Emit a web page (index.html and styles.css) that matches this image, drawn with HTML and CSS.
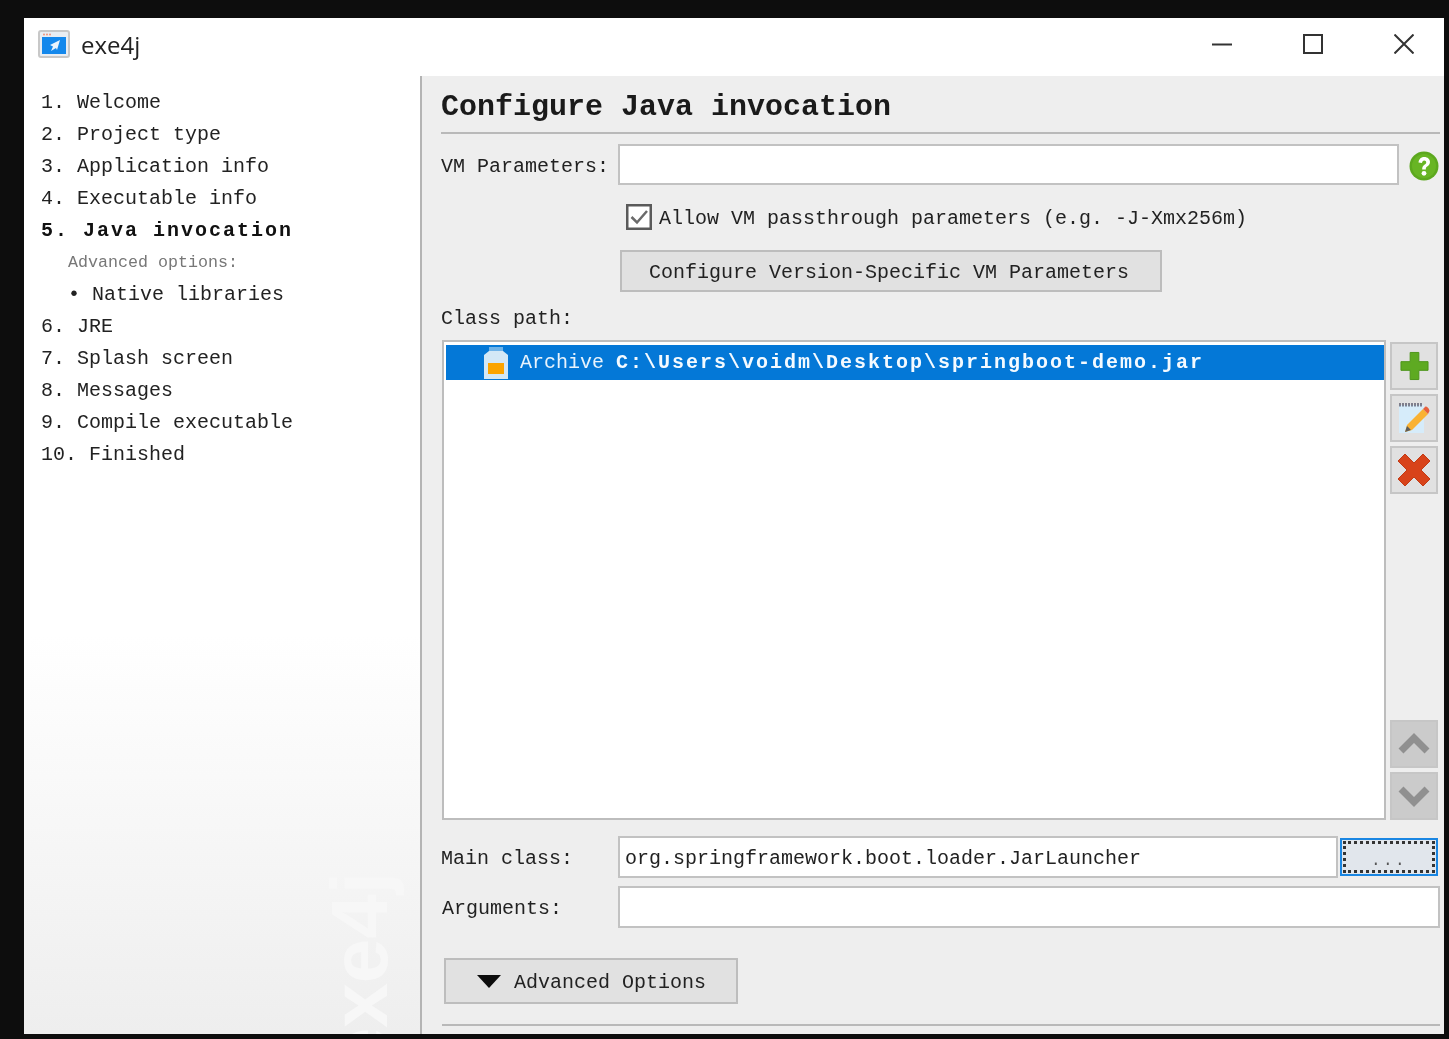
FILE: index.html
```html
<!DOCTYPE html>
<html lang="en">
<head>
<meta charset="utf-8">
<title>exe4j</title>
<link rel="stylesheet" href="styles.css">
</head>
<body>
<div class="window">
  <header class="titlebar">
    <svg class="app-icon" viewBox="0 0 32 28" aria-hidden="true">
      <rect x="1" y="1" width="30" height="26" rx="2" fill="#e9edf2" stroke="#c8c8c8" stroke-width="2"/>
      <rect x="4" y="7" width="24" height="17" fill="#1488ec"/>
      <circle cx="6" cy="4.5" r="0.9" fill="#f08a70"/><circle cx="9" cy="4.5" r="0.9" fill="#f08a70"/><circle cx="12" cy="4.5" r="0.9" fill="#f08a70"/>
      <path d="M22 10 L12 15 L15 16.5 L13 21 L18 18 L19 20 Z" fill="#eaf4fd"/>
    </svg>
    <span class="app-name">exe4j</span>
    <div class="win-controls">
      <svg viewBox="0 0 20 20" aria-hidden="true"><path d="M0 10.5H20" stroke="#333" stroke-width="2"/></svg>
      <svg viewBox="0 0 20 20" aria-hidden="true"><rect x="1" y="1" width="18" height="18" fill="none" stroke="#333" stroke-width="2"/></svg>
      <svg viewBox="0 0 20 20" aria-hidden="true"><path d="M0.5 0.5L19.5 19.5M19.5 0.5L0.5 19.5" stroke="#333" stroke-width="2"/></svg>
    </div>
  </header>
  <div class="main">
    <aside class="sidebar">
      <ol class="steps">
        <li>1.&nbsp;Welcome</li>
        <li>2.&nbsp;Project type</li>
        <li>3.&nbsp;Application info</li>
        <li>4.&nbsp;Executable info</li>
        <li class="current">5.&nbsp;Java invocation</li>
        <li class="sub-head">Advanced options:</li>
        <li class="sub-item"><span class="bullet">•</span>Native libraries</li>
        <li>6.&nbsp;JRE</li>
        <li>7.&nbsp;Splash screen</li>
        <li>8.&nbsp;Messages</li>
        <li>9.&nbsp;Compile executable</li>
        <li>10.&nbsp;Finished</li>
      </ol>
      <div class="watermark">exe4j</div>
    </aside>
    <main class="content">
      <h1 class="page-title">Configure Java invocation</h1>
      <div class="row vm-row">
        <label class="label">VM Parameters:</label>
        <div class="field vm-field"></div>
        <svg class="help" viewBox="0 0 30 30" aria-hidden="true">
          <circle cx="15" cy="15" r="14.5" fill="#5ca81e"/>
          <circle cx="15" cy="15" r="12" fill="#68b524"/>
          <path d="M9.5 11.5C9.8 7.8 12.5 6 15.3 6C18.6 6 21 8.2 21 11.1C21 13.4 19.6 14.6 18.2 15.6C17 16.4 16.8 17 16.8 18.5H13.2C13.1 16.2 13.8 14.8 15.4 13.7C16.6 12.9 17.2 12.3 17.2 11.4C17.2 10.4 16.4 9.6 15.2 9.6C14 9.6 13.2 10.5 13 12Z" fill="#fff"/>
          <circle cx="15" cy="22.3" r="2.4" fill="#fff"/>
        </svg>
      </div>
      <div class="check-row">
        <svg class="checkbox" viewBox="0 0 26 26" aria-hidden="true">
          <rect x="1.25" y="1.25" width="23.5" height="23.5" fill="#fff" stroke="#5a5a5a" stroke-width="2.5"/>
          <path d="M5.5 13L11 18.5L21 7" fill="none" stroke="#6a6a6a" stroke-width="2.5"/>
        </svg>
        <span class="lowered">Allow VM passthrough parameters (e.g. -J-Xmx256m)</span>
      </div>
      <button class="btn config-btn" type="button">Configure Version-Specific VM Parameters</button>
      <div class="label class-label">Class path:</div>
      <div class="class-area">
        <div class="list">
          <div class="list-row">
            <svg class="jar" viewBox="0 0 24 32" aria-hidden="true">
              <path d="M5 0H19V4L24 8V32H0V8L5 4Z" fill="#d3e8f6"/>
              <path d="M5 0H19V4H5Z" fill="#6fb3e8"/>
              <rect x="4" y="16" width="16" height="11" fill="#fba400"/>
            </svg>
            <span>Archive <b class="path">C:\Users\voidm\Desktop\springboot-demo.jar</b></span>
          </div>
        </div>
        <div class="tools">
          <button class="tool" type="button" aria-label="Add">
            <svg class="icon-add" viewBox="0 0 30 30" aria-hidden="true"><path d="M10.5 1H19.5V10.5H29V19.5H19.5V29H10.5V19.5H1V10.5H10.5Z" fill="#5eaa22" stroke="#4c9418" stroke-width="1"/></svg>
          </button>
          <button class="tool" type="button" aria-label="Edit">
            <svg viewBox="0 0 32 32" aria-hidden="true">
              <rect x="1" y="3" width="25" height="28" fill="#d6ecfa"/>
              <path d="M2 1V4.5M5 1V4.5M8 1V4.5M11 1V4.5M14 1V4.5M17 1V4.5M20 1V4.5M23 1V4.5" stroke="#667" stroke-width="1.6"/>
              <path d="M9 23L25 7L30 12L14 28L7 30Z" fill="#f9b233"/>
              <path d="M25 7L27.5 4.5C28.5 4 31.5 6.5 31.5 9L30 12Z" fill="#e8603c"/>
              <path d="M9 24L7 30L13 28Z" fill="#5c5c5c"/>
            </svg>
          </button>
          <button class="tool" type="button" aria-label="Remove">
            <svg class="icon-remove" viewBox="0 0 34 34" aria-hidden="true"><path d="M8 1L17 10L26 1L33 8L24 17L33 26L26 33L17 24L8 33L1 26L10 17L1 8Z" fill="#d8431a" stroke="#c23a14" stroke-width="1"/></svg>
          </button>
          <div class="tools-space"></div>
          <button class="tool disabled" type="button" aria-label="Up">
            <svg viewBox="0 0 32 22" aria-hidden="true"><path d="M3 18L16 5L29 18" fill="none" stroke="#909090" stroke-width="7"/></svg>
          </button>
          <button class="tool disabled" type="button" aria-label="Down">
            <svg viewBox="0 0 32 22" aria-hidden="true"><path d="M3 4L16 17L29 4" fill="none" stroke="#909090" stroke-width="7"/></svg>
          </button>
        </div>
      </div>
      <div class="row main-row">
        <label class="label">Main class:</label>
        <div class="field main-field">org.springframework.boot.loader.JarLauncher</div>
        <button class="browse" type="button"><span>...</span></button>
      </div>
      <div class="row args-row">
        <label class="label">Arguments:</label>
        <div class="field args-field"></div>
      </div>
      <button class="btn adv-btn" type="button"><i class="tri"></i><span class="lowered">Advanced Options</span></button>
      <div class="bottom-rule"></div>
    </main>
  </div>
</div>
</body>
</html>
```
FILE: styles.css
```css
* { box-sizing: border-box; }
html, body { margin: 0; height: 100%; }
body {
  background: #0d0d0d;
  padding: 18px 5px 5px 24px;
  overflow: hidden;
  font-family: "Liberation Mono", "DejaVu Sans Mono", monospace;
  font-size: 20px;
  color: #222;
}
.window {
  height: 1016px;
  display: flex;
  flex-direction: column;
  background: #fff;
  overflow: hidden;
  filter: blur(0.45px);
}
.titlebar {
  height: 58px;
  flex: none;
  display: flex;
  align-items: center;
  padding: 0 30px 6px 14px;
}
.app-icon { width: 32px; height: 28px; margin-right: 11px; }
.app-name { font-family: "Open Sans", sans-serif; font-size: 24px; color: #222; }
.win-controls { margin-left: auto; display: flex; gap: 71px; }
.win-controls svg { width: 20px; height: 20px; display: block; }
.main { flex: 1; display: flex; min-height: 0; }
.sidebar {
  width: 398px;
  flex: none;
  position: relative;
  overflow: hidden;
  border-right: 2px solid #b4b4b4;
  background: linear-gradient(#fff 0, #fff 560px, #eeeeee 958px);
}
.steps { list-style: none; margin: 0; padding: 11px 0 0 17px; }
.steps li { height: 32px; line-height: 32px; white-space: nowrap; }
.steps .current { font-weight: 700; letter-spacing: 2px; color: #111; }
.steps .sub-head { font-size: 16.67px; color: #777; padding-left: 27px; }
.steps .sub-item { padding-left: 27px; display: flex; }
.bullet { width: 24px; flex: none; }
.watermark {
  position: absolute;
  left: 298px;
  bottom: -38px;
  font-family: "Liberation Sans", sans-serif;
  font-weight: 700;
  font-size: 80px;
  line-height: 76px;
  color: #f7f7f7;
  writing-mode: vertical-rl;
  transform: rotate(180deg);
}
.content {
  flex: 1;
  min-width: 0;
  background: #eeeeee;
  padding: 0 4px 0 19px;
  display: flex;
  flex-direction: column;
}
.page-title {
  margin: 0;
  padding: 11px 0 5px;
  height: 58px;
  font-size: 30px;
  line-height: 40px;
  font-weight: 700;
  color: #1a1a1a;
  border-bottom: 2px solid #b9b9b9;
}
.row { display: flex; }
.label { display: block; color: #222; white-space: nowrap; }
.lowered { padding-top: 2px; }
.field {
  background: #fff;
  border: 2px solid #c2c2c2;
  padding-left: 5px;
  color: #222;
}
.vm-row { margin-top: 10px; align-items: flex-start; }
.vm-row .label { width: 177px; height: 41px; line-height: 46px; }
.vm-field { width: 781px; height: 41px; }
.help { width: 30px; height: 30px; margin: 7px 0 0 10px; }
.check-row {
  margin: 19px 0 0 185px;
  height: 26px;
  display: flex;
  align-items: center;
  gap: 7px;
  white-space: nowrap;
}
.checkbox { width: 26px; height: 26px; flex: none; }
.btn {
  display: block;
  font: inherit;
  color: #222;
  background: #e1e1e1;
  border: 2px solid #bdbdbd;
  padding: 0;
}
.config-btn { width: 542px; height: 42px; margin: 20px 0 0 179px; padding: 2px 4px 0 0; }
.class-label { height: 24px; line-height: 26px; margin-top: 14px; }
.class-area { margin: 10px 0 0 1px; display: flex; gap: 4px; align-items: stretch; height: 480px; }
.list {
  width: 944px;
  background: #fff;
  border: 2px solid #bdbdbd;
  padding: 3px 0 0 2px;
}
.list-row {
  height: 35px;
  background: #0478d7;
  color: #e8f3fc;
  display: flex;
  align-items: center;
  padding-left: 38px;
  gap: 12px;
  white-space: nowrap;
}
.jar { width: 24px; height: 32px; flex: none; }
.path { letter-spacing: 2px; color: #f4faff; }
.tools { width: 48px; display: flex; flex-direction: column; gap: 4px; padding-top: 2px; }
.tools-space { flex: 1; }
.tool {
  width: 48px;
  height: 48px;
  flex: none;
  padding: 0;
  background: #e1e1e1;
  border: 2px solid #c6c6c6;
  display: flex;
  align-items: center;
  justify-content: center;
}
.tool svg { width: 32px; height: 32px; }
.tool .icon-add { width: 29px; height: 30px; }
.tool .icon-remove { width: 34px; height: 34px; }
.tool.disabled { background: #cbcbcb; }
.main-row { margin-top: 16px; align-items: flex-start; }
.main-row .label { width: 177px; height: 42px; line-height: 46px; }
.main-field { width: 720px; height: 42px; line-height: 42px; }
.browse {
  width: 98px;
  height: 38px;
  margin: 2px 0 0 2px;
  padding: 1px;
  font: inherit;
  color: #555;
  background: #e1e6ec;
  border: 2px solid #1a86e2;
  display: flex;
}
.browse span {
  flex: 1;
  border: 3px dotted #333;
  line-height: 34px;
  font-size: 16px;
  letter-spacing: 2.4px;
  text-align: center;
}
.args-row { margin-top: 8px; align-items: flex-start; }
.args-row .label { padding-left: 1px; width: 177px; height: 42px; line-height: 46px; }
.args-field { width: 822px; height: 42px; }
.adv-btn {
  width: 294px;
  height: 46px;
  margin: 30px 0 0 3px;
  display: flex;
  align-items: center;
  text-align: left;
  padding-left: 31px;
}
.tri {
  width: 0;
  height: 0;
  border-left: 12px solid transparent;
  border-right: 12px solid transparent;
  border-top: 13px solid #0c0c0c;
  margin-right: 13px;
}
.bottom-rule { margin: 20px 0 0 1px; height: 2px; width: 998px; background: #b9b9b9; flex: none; }
```
